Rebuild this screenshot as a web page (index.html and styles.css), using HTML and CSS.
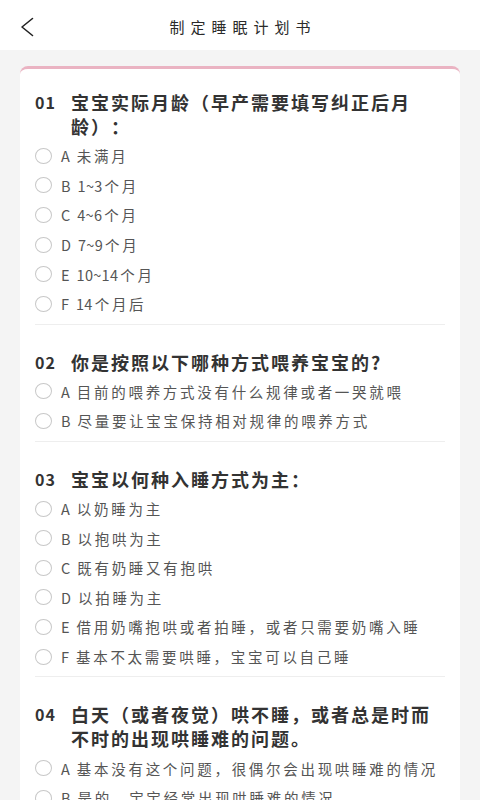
FILE: index.html
```html
<!DOCTYPE html>
<html lang="zh-CN">
<head>
<meta charset="utf-8">
<meta name="viewport" content="width=480">
<title>制定睡眠计划书</title>
<link rel="stylesheet" href="styles.css">
</head>
<body>
<header class="topbar">
  <button class="back" aria-label="返回">
    <svg width="14" height="20" viewBox="0 0 14 20"><path d="M12.5 1.5 L2 10 L12.5 18.5" fill="none" stroke="#222" stroke-width="1.6" stroke-linecap="round" stroke-linejoin="round"/></svg>
  </button>
  <h1 class="title">制定睡眠计划书</h1>
</header>
<main class="page">
  <section class="card">
    <div class="q">
      <div class="q-title"><span class="num">01</span><span class="q-text">宝宝实际月龄（早产需要填写纠正后月龄）：</span></div>
      <ul class="opts">
        <li class="opt"><span class="radio"></span><span class="key">A</span><span>未满月</span></li>
        <li class="opt"><span class="radio"></span><span class="key">B</span><span><span class="lat">1~3</span>个月</span></li>
        <li class="opt"><span class="radio"></span><span class="key">C</span><span><span class="lat">4~6</span>个月</span></li>
        <li class="opt"><span class="radio"></span><span class="key">D</span><span><span class="lat">7~9</span>个月</span></li>
        <li class="opt"><span class="radio"></span><span class="key">E</span><span><span class="lat">10~14</span>个月</span></li>
        <li class="opt"><span class="radio"></span><span class="key">F</span><span><span class="lat">14</span>个月后</span></li>
      </ul>
    </div>
    <div class="q">
      <div class="q-title"><span class="num">02</span><span class="q-text">你是按照以下哪种方式喂养宝宝的?</span></div>
      <ul class="opts">
        <li class="opt"><span class="radio"></span><span class="key">A</span><span>目前的喂养方式没有什么规律或者一哭就喂</span></li>
        <li class="opt"><span class="radio"></span><span class="key">B</span><span>尽量要让宝宝保持相对规律的喂养方式</span></li>
      </ul>
    </div>
    <div class="q">
      <div class="q-title"><span class="num">03</span><span class="q-text">宝宝以何种入睡方式为主：</span></div>
      <ul class="opts">
        <li class="opt"><span class="radio"></span><span class="key">A</span><span>以奶睡为主</span></li>
        <li class="opt"><span class="radio"></span><span class="key">B</span><span>以抱哄为主</span></li>
        <li class="opt"><span class="radio"></span><span class="key">C</span><span>既有奶睡又有抱哄</span></li>
        <li class="opt"><span class="radio"></span><span class="key">D</span><span>以拍睡为主</span></li>
        <li class="opt"><span class="radio"></span><span class="key">E</span><span>借用奶嘴抱哄或者拍睡，或者只需要奶嘴入睡</span></li>
        <li class="opt"><span class="radio"></span><span class="key">F</span><span>基本不太需要哄睡，宝宝可以自己睡</span></li>
      </ul>
    </div>
    <div class="q">
      <div class="q-title"><span class="num">04</span><span class="q-text">白天（或者夜觉）哄不睡，或者总是时而不时的出现哄睡难的问题。</span></div>
      <ul class="opts">
        <li class="opt"><span class="radio"></span><span class="key">A</span><span>基本没有这个问题，很偶尔会出现哄睡难的情况</span></li>
        <li class="opt"><span class="radio"></span><span class="key">B</span><span>是的，宝宝经常出现哄睡难的情况</span></li>
      </ul>
    </div>
  </section>
</main>
</body>
</html>
```
FILE: styles.css
```css
* { box-sizing: border-box; }
html, body {
  margin: 0;
  padding: 0;
  background: #f4f4f4;
  font-family: "Noto Sans CJK SC", "Noto Sans", sans-serif;
  height: 800px;
  overflow: hidden;
  text-spacing-trim: space-all;
}
.topbar {
  height: 50px;
  background: #fff;
  display: flex;
  align-items: center;
  justify-content: center;
  position: relative;
}
.back {
  position: absolute;
  left: 20px;
  top: 16px;
  width: 16px;
  height: 22px;
  padding: 0;
  border: 0;
  background: none;
  display: flex;
  align-items: center;
}
.title {
  margin: 0;
  padding-left: 6px;
  font-size: 15px;
  font-weight: 400;
  letter-spacing: 6px;
  color: #2a2a2a;
  line-height: 20px;
  margin-top: 4px;
}
.page {
  padding: 16px 20px 0;
}
.card {
  background: #fff;
  border-top: 3px solid #eab3c2;
  border-radius: 8px 8px 0 0;
  padding: 0 15px;
}
.q {
  padding: 25px 0 5px;
  border-bottom: 1px solid #eeeeee;
}
.q:first-child {
  padding-top: 21px;
}
.q-title {
  display: grid;
  grid-template-columns: 36px 1fr;
  font-size: 18px;
  line-height: 24px;
  font-weight: 700;
  color: #333;
  letter-spacing: 2px;
  margin-bottom: 3px;
}
.num {
  font-size: 16px;
  letter-spacing: 1px;
}
.opts {
  list-style: none;
  margin: 0;
  padding: 0;
}
.opt {
  display: flex;
  align-items: center;
  height: 29.6px;
  font-size: 14.5px;
  letter-spacing: 2.7px;
  color: #555;
  white-space: nowrap;
}
.radio {
  flex: none;
  width: 17px;
  height: 16px;
  border: 1px solid #c8c8c8;
  border-radius: 50%;
  margin-right: 9px;
}
.key {
  letter-spacing: 0;
  margin-right: 7px;
}
.lat {
  letter-spacing: 0.3px;
  margin-right: 2px;
}
```
